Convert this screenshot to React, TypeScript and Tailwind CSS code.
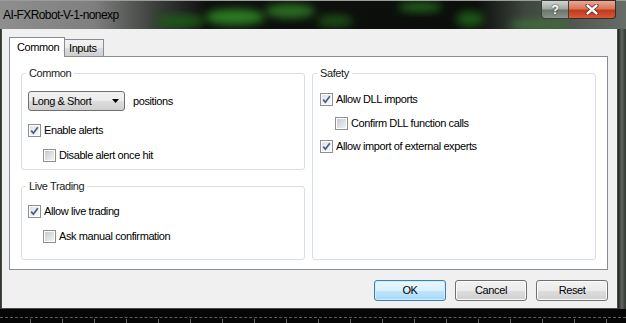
import React from 'react';

function CheckBox({ checked }: { checked: boolean }) {
  return (
    <span className="flex h-[13px] w-[13px] shrink-0 border border-[#8e8f8f] bg-white p-[1px]">
      <span
        className={
          checked
            ? 'flex h-full w-full items-center justify-center bg-[linear-gradient(135deg,#dfe3ea,#f7f8fa)]'
            : 'flex h-full w-full items-center justify-center bg-[linear-gradient(135deg,#c6cad0,#f3f3f3)]'
        }
      >
        {checked && (
          <svg width="9" height="9" viewBox="0 0 9 9">
            <path d="M1.2 4.6 L3.4 7.2 L7.8 1.3" fill="none" stroke="#4a5b86" strokeWidth="1.7" />
          </svg>
        )}
      </span>
    </span>
  );
}

function Option({ checked, label, className }: { checked: boolean; label: string; className: string }) {
  return (
    <div className={'flex h-[13px] items-center gap-[3px] ' + className}>
      <CheckBox checked={checked} />
      <span className="leading-[13px] whitespace-nowrap">{label}</span>
    </div>
  );
}

function Group({ title, className, children }: { title: string; className: string; children: React.ReactNode }) {
  return (
    <div className={'relative rounded-[3px] border border-[#d5dfe5] ' + className}>
      <span className="absolute left-[4px] top-[-7px] bg-white px-[3px] leading-[13px] text-[#1a1a1a]">{title}</span>
      {children}
    </div>
  );
}

export default function App() {
  const ticks = Array.from({ length: 19 });

  return (
    <div className="flex h-[323px] w-[626px] flex-col overflow-hidden bg-black font-['Liberation_Sans',Arial,sans-serif] text-[11px] tracking-[-0.4px] text-black">
      {/* title bar */}
      <div className="relative flex h-[29px] shrink-0 items-start justify-between border-t border-[#9c9c9c] bg-[linear-gradient(to_right,#8e8e8e_0%,#7f7f7f_15%,#3a3e3a_25%,#0d100d_33%,#0b0e0b_76%,#3f453f_84%,#666c66_100%)]">
        <svg className="absolute inset-0" width="626" height="28" viewBox="0 0 626 28">
          <defs>
            <filter id="blur2" x="-50%" y="-50%" width="200%" height="200%">
              <feGaussianBlur stdDeviation="4" />
            </filter>
          </defs>
          <ellipse cx="180" cy="20" rx="25" ry="6" fill="#1f5a18" filter="url(#blur2)" />
          <ellipse cx="235" cy="16" rx="30" ry="8" fill="#2c7a22" filter="url(#blur2)" />
          <ellipse cx="290" cy="10" rx="25" ry="7" fill="#2a6e20" filter="url(#blur2)" />
          <ellipse cx="335" cy="20" rx="18" ry="6" fill="#1d4d16" filter="url(#blur2)" />
          <ellipse cx="420" cy="6" rx="22" ry="5" fill="#24621c" filter="url(#blur2)" />
          <ellipse cx="470" cy="18" rx="14" ry="8" fill="#1f5519" filter="url(#blur2)" />
          <ellipse cx="540" cy="24" rx="30" ry="6" fill="#3f6a3a" filter="url(#blur2)" />
        </svg>
        <span className="relative pl-[3px] pt-[7px] text-[12px] leading-[14px] tracking-[-0.6px] text-black">
          AI-FXRobot-V-1-nonexp
        </span>
        <div className="relative mr-[10px] mt-[-1px] flex">
          <div className="flex h-[19px] w-[28px] items-center justify-center rounded-bl-[4px] border border-[#3b3f3b] bg-[linear-gradient(to_bottom,#d2d6d2_0%,#a2a9a2_45%,#6c766c_55%,#8b948b_100%)] text-[12px] font-bold text-white [text-shadow:0_0_2px_#222]">
            ?
          </div>
          <div className="flex h-[19px] w-[47px] items-center justify-center rounded-br-[4px] border border-l-0 border-[#3b2a26] bg-[linear-gradient(to_bottom,#e9a893_0%,#d8775c_45%,#c2391c_55%,#d65a3a_100%)]">
            <svg width="14" height="11" viewBox="0 0 14 11">
              <path d="M2.5 1.5 L11.5 9.5 M11.5 1.5 L2.5 9.5" stroke="#5a1e12" strokeWidth="4" strokeLinecap="round" />
              <path d="M2.5 1.5 L11.5 9.5 M11.5 1.5 L2.5 9.5" stroke="#ffffff" strokeWidth="2.4" strokeLinecap="round" />
            </svg>
          </div>
        </div>
      </div>

      {/* body */}
      <div className="flex h-[280px] shrink-0">
        <div className="w-[1px] bg-[#2b3a2b]" />
        <div className="flex w-[617px] flex-col border-x border-b border-[#4a4a4a] bg-[#f0f0f0] pl-[7px] pr-[9px] pt-[8px]">
          {/* tabs */}
          <div className="flex h-[19px] items-end">
            <div className="relative z-10 -mb-px flex h-[20px] w-[56px] items-center border border-b-0 border-[#898c95] bg-white pl-[7px]">
              Common
            </div>
            <div className="flex h-[17px] w-[39px] items-center border border-b-0 border-l-0 border-[#898c95] bg-[linear-gradient(to_bottom,#f2f2f2_0%,#ebebeb_50%,#dddddd_51%,#cfcfcf_100%)] pl-[4px]">
              Inputs
            </div>
          </div>

          {/* panel */}
          <div className="grid h-[214px] grid-cols-2 gap-[7px] border border-[#898c95] bg-white px-[11px] pt-[16px]">
            <div className="flex flex-col">
              <Group title="Common" className="h-[97px] pl-[6px] pt-[17px]">
                <div className="flex items-center">
                  <div className="flex h-[20px] w-[97px] items-center justify-between rounded-[3px] border border-[#707070] bg-[linear-gradient(to_bottom,#f2f2f2_0%,#ebebeb_50%,#dddddd_51%,#cfcfcf_100%)] pl-[3px] pr-[5px]">
                    <span>Long &amp; Short</span>
                    <svg width="7" height="4" viewBox="0 0 7 4">
                      <path d="M0 0 H7 L3.5 4 Z" fill="#000" />
                    </svg>
                  </div>
                  <span className="ml-[8px]">positions</span>
                </div>
                <Option checked label="Enable alerts" className="mt-[13px]" />
                <Option checked={false} label="Disable alert once hit" className="ml-[15px] mt-[12px]" />
              </Group>
              <Group title="Live Trading" className="mt-[16px] h-[74px] pl-[6px] pt-[18px]">
                <Option checked label="Allow live trading" className="" />
                <Option checked={false} label="Ask manual confirmation" className="ml-[15px] mt-[12px]" />
              </Group>
            </div>
            <div className="flex flex-col">
              <Group title="Safety" className="h-[187px] pl-[7px] pt-[19px]">
                <Option checked label="Allow DLL imports" className="" />
                <Option checked={false} label="Confirm DLL function calls" className="ml-[15px] mt-[11px]" />
                <Option checked label="Allow import of external experts" className="mt-[10px]" />
              </Group>
            </div>
          </div>

          {/* buttons */}
          <div className="mt-[10px] flex justify-end gap-[9px]">
            <button className="flex h-[21px] w-[72px] items-center justify-center rounded-[3px] border border-[#3c7fb1] bg-[linear-gradient(to_bottom,#eaf6fd_0%,#d9f0fc_50%,#bee6fd_51%,#a7d9f5_100%)] shadow-[inset_0_0_0_1px_#cdebfb]">
              OK
            </button>
            <button className="flex h-[21px] w-[72px] items-center justify-center rounded-[3px] border border-[#707070] bg-[linear-gradient(to_bottom,#f2f2f2_0%,#ebebeb_50%,#dddddd_51%,#cfcfcf_100%)] shadow-[inset_0_0_0_1px_#fbfbfb]">
              Cancel
            </button>
            <button className="flex h-[21px] w-[72px] items-center justify-center rounded-[3px] border border-[#707070] bg-[linear-gradient(to_bottom,#f2f2f2_0%,#ebebeb_50%,#dddddd_51%,#cfcfcf_100%)] shadow-[inset_0_0_0_1px_#fbfbfb]">
              Reset
            </button>
          </div>
        </div>
        <div className="w-[8px] bg-[linear-gradient(to_right,#1e221e_0%,#5d665d_45%,#2f352f_100%)]" />
      </div>

      {/* bottom frame with chart grid behind */}
      <div className="flex flex-1 flex-col bg-[#060606] pt-[8px]">
        <div className="border-t border-dashed border-[#5c5c5c]" />
        <div className="flex gap-[31px] pl-[30px] pt-[1px]">
          {ticks.map((_, i) => (
            <div key={i} className="h-[4px] w-[1px] bg-[#6a6a6a]" />
          ))}
        </div>
      </div>
    </div>
  );
}
